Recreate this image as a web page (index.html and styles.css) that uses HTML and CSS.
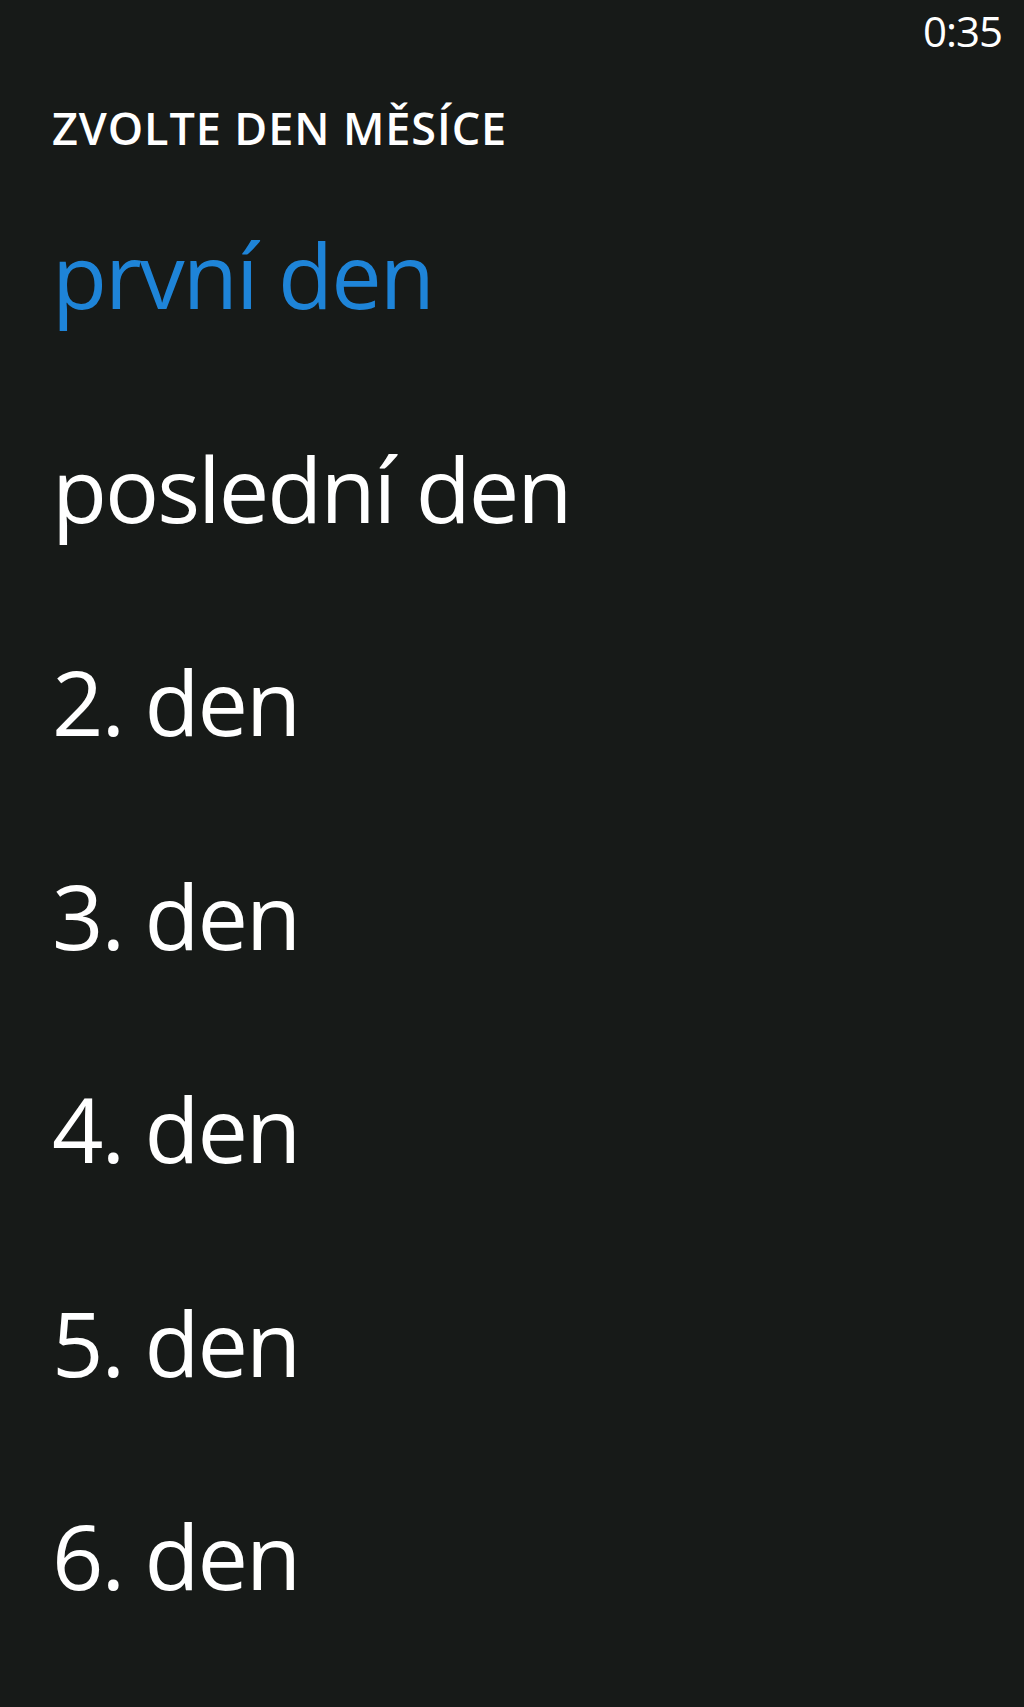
FILE: index.html
```html
<!DOCTYPE html>
<html lang="cs">
<head>
<meta charset="utf-8">
<title>Zvolte den měsíce</title>
<link rel="stylesheet" href="styles.css">
</head>
<body>
<div class="status"><span class="time">0:35</span></div>
<h1 class="title">ZVOLTE DEN MĚSÍCE</h1>
<ul class="list">
  <li class="item selected">první den</li>
  <li class="item">poslední den</li>
  <li class="item">2. den</li>
  <li class="item">3. den</li>
  <li class="item">4. den</li>
  <li class="item">5. den</li>
  <li class="item">6. den</li>
</ul>
</body>
</html>
```
FILE: styles.css
```css
html, body {
  margin: 0;
  padding: 0;
  background: #171a18;
  color: #ffffff;
  font-family: "Open Sans", "Noto Sans", sans-serif;
  height: 1707px;
  overflow: hidden;
}
.status {
  box-sizing: border-box;
  height: 105px;
  padding: 10px 22px 0 0;
  display: flex;
  justify-content: flex-end;
}
.time {
  font-size: 42px;
  line-height: 42px;
  font-weight: 400;
  letter-spacing: -1px;
}
.title {
  margin: 0;
  padding-left: 52px;
  font-size: 45px;
  line-height: 45px;
  font-weight: 600;
  letter-spacing: 0.9px;
}
.list {
  list-style: none;
  margin: 18px 0 0;
  padding: 0 0 0 52px;
}
.item {
  font-size: 90px;
  line-height: 213.5px;
  font-weight: 400;
  letter-spacing: -2px;
  white-space: nowrap;
}
.selected {
  color: #1e84d8;
}
```
